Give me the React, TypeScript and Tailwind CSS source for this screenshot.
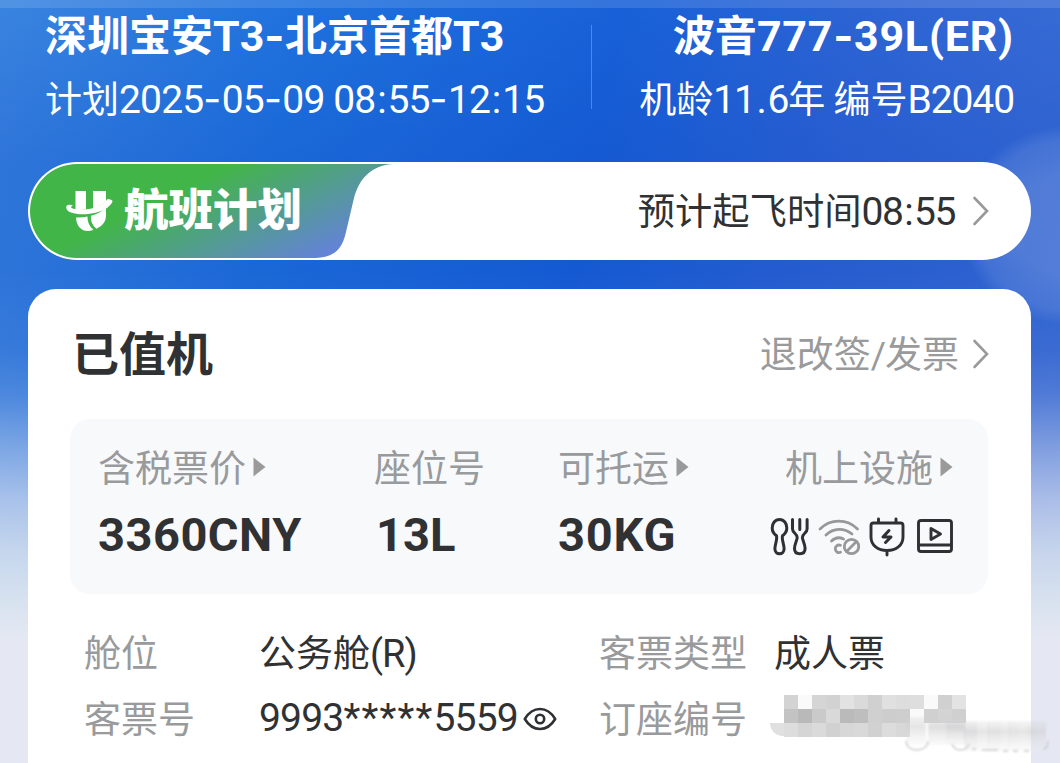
import React from 'react';

interface LatinProps {
  className?: string;
  children: React.ReactNode;
}

const Latin = ({ className = '', children }: LatinProps) => (
  <span className={`font-[Roboto,sans-serif] leading-none ${className}`}>{children}</span>
);

// Digits with wider separators, used for dates, times and codes
const Num = ({ value, className = 'text-[39px] tracking-[-1.1px]' }: { value: string; className?: string }) => (
  <Latin className={className}>
    {value.split(/([-:.]|\*+)/).map((part, i) => {
      if (part === '-') return <span key={i} className="font-[Inter,sans-serif] tracking-[0.5px]">-</span>;
      if (part === ':' || part === '.') return <span key={i} className="px-[1.7px]">{part}</span>;
      if (part.startsWith('*')) return <span key={i} className="tracking-[1.2px]">{part}</span>;
      return <React.Fragment key={i}>{part}</React.Fragment>;
    })}
  </Latin>
);

const Chevron = ({ className = '' }: { className?: string }) => (
  <svg className={`h-[30px] w-[18px] ${className}`} viewBox="0 0 18 30" fill="none" stroke="currentColor" strokeWidth="2.6" strokeLinecap="round">
    <path d="M2.500 2 15 15 2.500 28" />
  </svg>
);

const Caret = () => (
  <svg className="ml-1.5 h-5 w-3.5" viewBox="0 0 14 20" fill="#9a9a9b">
    <path d="M1.500 0.500 13.500 10 1.500 19.500Z" />
  </svg>
);

const CutleryIcon = () => (
  <svg className="h-10 w-10" viewBox="0 0 40 40" fill="none" stroke="#2f3033" strokeWidth="3" strokeLinecap="round" strokeLinejoin="round">
    <path d="M9.500 2.500c-4.500 0-7.300 4-7.300 8.500 0 4 2.300 6.300 4.300 7.800 1 3.500-1.600 8.500-1.600 13 0 3 2 5 4.600 5s4.600-2 4.600-5c0-4.500-2.600-9.500-1.600-13 2-1.500 4.300-3.800 4.300-7.800 0-4.500-2.800-8.500-7.300-8.500Z" />
    <path d="M22.500 2.500V12c0 4 4.700 4.500 4.700 8.500 0 2.500-2.700 6.500-2.700 11 0 3.200 2 5.300 5.300 5.300s5.300-2.100 5.300-5.300c0-4.500-2.700-8.500-2.700-11 0-4 4.700-4.500 4.700-8.500V2.500M29.800 2.500v10" />
  </svg>
);

const WifiOffIcon = () => (
  <svg className="h-10 w-[42px]" viewBox="0 0 42 40" fill="none" stroke="#97989a" strokeWidth="2.800" strokeLinecap="round">
    <path d="M2 12C12.500 1.500 29 1.500 39.500 12M8 18c7.500-7.300 18-7.300 26-1M13.500 24c3.500-3.300 8-4 12-2" />
    <path d="M22.500 28.300c-2.500-1-5.200.7-5.200 3.500s2.700 4.500 5.200 3.500" />
    <circle cx="33.500" cy="29.500" r="7.200" />
    <path d="m28.500 34.500 10-10" />
  </svg>
);

const PowerIcon = () => (
  <svg className="h-10 w-9" viewBox="0 0 36 40" fill="none" stroke="#2f3033" strokeWidth="2.900" strokeLinecap="round" strokeLinejoin="round">
    <path d="M4.500 6h27c1.500 0 2.500 1 2.500 2.500V20C34 28.500 27 33.500 18 33.500S2 28.500 2 20V8.500C2 7 3 6 4.500 6ZM9.500 6V2M27 6V2M18 34.500V38" />
    <path d="m20 13.500-6 6.500h8l-5.500 5.500" strokeWidth="3" />
  </svg>
);

const VideoIcon = () => (
  <svg className="h-10 w-9" viewBox="0 0 36 40" fill="none" stroke="#2f3033" strokeWidth="2.900" strokeLinejoin="round">
    <rect x="1.500" y="3.500" width="33" height="31" rx="2.500" />
    <path d="M1.500 28h33" />
    <path d="M14 11.500v11l9.500-5.500Z" />
  </svg>
);

const EyeIcon = () => (
  <svg className="ml-[5px] h-6 w-[34px]" viewBox="0 0 34 24" fill="none" stroke="#2f3033" strokeWidth="2.600" strokeLinejoin="round">
    <path d="M1.800 12C6 5 11.500 2 17 2s11 3 15.200 10C28 19 22.500 22 17 22S6 19 1.800 12Z" />
    <circle cx="17" cy="12" r="4.200" />
  </svg>
);

const AppLogo = () => (
  <svg className="h-[44px] w-[50px]" viewBox="0 0 50 44" fill="#fff">
    <path d="M10.500 2h10.500v18.500l-10.500.8ZM28 2h13v10.500c-3.500 3.500-8 5.800-13 7Z" />
    <path d="M1.500 17c1.500-1.500 4-1.500 6.500-.5-2 .8-2.500 2-1 2.800 8 3 30 1 35.500-9.300 2.200.3 4 .8 4.700 1.500 1 1.500-1 4-4.500 7C31 28-2 27.500 1.500 17Z" />
    <path d="M11 28.500c4 .3 8-.1 11.500-.9 0 6 2.200 10 6 13.200C20 44.500 11.500 40 11 28.500ZM26 26.800c5.500-1.500 10.500-4 15-7.800v7.500c0 6.500-3.800 10.500-9.500 13.200-4-3.200-6-7-5.500-12.900Z" />
  </svg>
);

const mosaic = [
  ['#d3d3d3', '#fafafa', '#d5d5d5', '#d2d2d2', '#e2e2e2', '#dadada', '#d0d0d0', '#e0e0e0', '#dddddd', '#dedede', '#fafafa', '#d0d0d0', '#e3e3e3'],
  ['#c3c3c3', '#b9b9b9', '#cacaca', '#d9d9d9', '#bababa', '#bebebe', '#d0d0d0', '#cdcdcd', '#cecece', '#fafafa', '#d0d0d0', '#d4d4d4', '#d0d0d0'],
  ['#dddddd', '#d5d5d5', '#dadada', '#d1d1d1', '#d7d7d7', '#d9d9d9', '#d1d1d1', '#dcdcdc', '#d8d8d8', '#ffffff', '#ffffff', '#ffffff', '#ffffff'],
];

// x, width and opacity of each streak in the smeared stamp
const streaks = [
  [4, 20, 0.55], [26, 18, 0.7], [44, 19, 0.9], [62, 13, 0.75], [75, 12, 0.55], [86, 13, 0.65],
  [99, 9, 0.55], [107, 10, 0.6], [117, 9, 0.55], [126, 9, 0.65], [135, 9, 0.55],
];

const Smear = () => (
  <svg className="absolute right-2 bottom-2 h-[38px] w-[150px] blur-[1px]" viewBox="0 0 150 38">
    <defs>
      <linearGradient id="smear" x1="0" y1="0" x2="0" y2="1">
        <stop offset="0" stopColor="#d4d4d6" stopOpacity="0.4" />
        <stop offset="0.35" stopColor="#cfcfd1" />
        <stop offset="1" stopColor="#ececee" stopOpacity="0.4" />
      </linearGradient>
    </defs>
    {streaks.map(([x, width, opacity]) => (
      <rect key={x} x={x} y={x < 60 ? 0 : 4} width={width} height={x < 60 ? 28 : 30} fill="url(#smear)" opacity={opacity} />
    ))}
    <path d="M4 24c0 12 22 12 22 0M50 27c3 8 14 8 17 0M70 32h4M80 33h16M101 34h5M111 34h5M122 34h5M141 32c4 0 5-4 5-8" fill="none" stroke="#cacace" strokeWidth="1.400" />
  </svg>
);

const App = () => {
  return (
    <div className="relative h-[763px] w-[1060px] overflow-hidden bg-[#1a62d8] bg-[linear-gradient(180deg,rgba(229,232,243,0)_270px,rgba(229,232,243,0.06)_350px,rgba(229,232,243,0.18)_395px,rgba(229,232,243,0.45)_450px,rgba(229,232,243,0.68)_500px,rgba(226,233,241,0.84)_550px,rgba(226,233,241,0.95)_605px,#e5e8f3_640px),radial-gradient(ellipse_110px_100px_at_1070px_225px,rgba(255,255,255,0.17)_50%,rgba(255,255,255,0.1)_85%,transparent),linear-gradient(180deg,transparent,rgba(0,50,180,0.16)_160px),linear-gradient(100deg,#3a84e0_0%,#1f72de_25%,#1861d8_52%,#2d64d4_72%,#3c6fd6_100%)] font-['Noto_Sans_CJK_SC',sans-serif] text-[#303133]">
      <div className="h-2 bg-white/12" />

      {/* Route and aircraft */}
      <header className="flex h-[154px] justify-between pl-[45px] pr-[46px] text-white">
        <div>
          <h1 className="h-[52px] text-[42px] leading-[50px] font-bold whitespace-nowrap">
            深圳宝安<Num value="T3-" className="text-[43px]" />北京首都<Num value="T3" className="text-[43px]" />
          </h1>
          <p className="mt-[11px] text-[37px] leading-[52px] whitespace-nowrap">
            计划<Num value="2025-05-09 08:55-12:15" className="text-[39px] tracking-[-0.85px]" />
          </p>
        </div>
        <div className="mt-[17px] ml-auto h-[84px] w-px bg-white/25" />
        <div className="ml-[47px] text-right">
          <h2 className="h-[52px] text-[42px] leading-[50px] font-bold whitespace-nowrap">
            波音<Num value="777-39L(ER)" className="text-[43px] tracking-[0.8px]" />
          </h2>
          <p className="mt-[11px] text-[37px] leading-[52px] whitespace-nowrap">
            机龄<Num value="11.6" />年 编号<Num value="B2040" />
          </p>
        </div>
      </header>

      {/* Flight status */}
      <section className="mx-7 flex h-[98px] w-[1003px] items-center overflow-hidden rounded-full bg-white pr-[41px]">
        <div className="relative h-full w-[370px]">
          <svg className="absolute inset-0 h-[98px] w-[370px]" viewBox="0 0 370 98">
            <defs>
              <linearGradient id="tab" gradientUnits="userSpaceOnUse" x1="190" y1="10" x2="255" y2="145">
                <stop offset="0" stopColor="#42b549" />
                <stop offset="0.800" stopColor="#6383d6" />
              </linearGradient>
            </defs>
            <path d="M49 2H366C342 3 331 18 326 36L318 70C314 88 306 95 288 96H49A47 47 0 0 1 49 2Z" fill="url(#tab)" />
          </svg>
          <div className="relative flex h-full items-center pl-[37px] text-white">
            <AppLogo />
            <span className="mb-[7px] ml-[9px] text-[44.5px] leading-none font-black">航班计划</span>
          </div>
        </div>
        <p className="mb-[3px] ml-auto text-[37.3px] whitespace-nowrap">
          预计起飞时间<Num value="08:55" className="text-[39px] tracking-[-1.4px]" />
        </p>
        <Chevron className="ml-[17px] text-[#999]" />
      </section>

      {/* Ticket card */}
      <main className="mt-[29px] ml-7 h-[474px] w-[1003px] rounded-t-[28px] bg-white pt-[32px]">
        <div className="flex h-[66px] items-center justify-between pr-[41px] pl-[44px]">
          <h2 className="mb-[7px] text-[47px] leading-none font-bold">已值机</h2>
          <div className="flex items-center text-[37px] text-[#999a9c]">
            <span className="mb-[4px] leading-[50px]">退改签<Latin className="text-[37px] tracking-[-1px]">/</Latin>发票</span>
            <Chevron className="ml-[13px]" />
          </div>
        </div>

        <div className="mt-[32px] ml-[42px] flex h-[175px] w-[918px] rounded-[20px] bg-[#f8f9fb] pt-[22px] pl-[28px]">
          <div className="w-[276px]">
            <div className="flex h-[52px] items-center text-[37px] text-[#999a9c]">含税票价<Caret /></div>
            <Latin className="mt-[18px] block text-[47px] font-bold tracking-[0.5px]">3360CNY</Latin>
          </div>
          <div className="w-[184px]">
            <div className="flex h-[52px] items-center text-[37px] text-[#999a9c]">座位号</div>
            <Latin className="mt-[18px] ml-[2px] block text-[47px] font-bold">13L</Latin>
          </div>
          <div className="w-[212px]">
            <div className="flex h-[52px] items-center text-[37px] text-[#999a9c]">可托运<Caret /></div>
            <Latin className="mt-[18px] block text-[47px] font-bold tracking-[0.8px]">30KG</Latin>
          </div>
          <div>
            <div className="ml-[15px] flex h-[52px] items-center text-[37px] text-[#999a9c]">机上设施<Caret /></div>
            <div className="mt-[24px] flex">
              <CutleryIcon />
              <div className="ml-[8px]"><WifiOffIcon /></div>
              <div className="ml-[9px]"><PowerIcon /></div>
              <div className="ml-[12px]"><VideoIcon /></div>
            </div>
          </div>
        </div>

        <div className="mt-[24px] grid auto-rows-[66px] grid-cols-[175px_340px_175px_1fr] pl-[56px] text-[37px] leading-[66px] whitespace-nowrap">
          <span className="text-[#999a9c]">舱位</span>
          <span>公务舱<Latin className="text-[38px] tracking-[-1px]">(R)</Latin></span>
          <span className="text-[#999a9c]">客票类型</span>
          <span>成人票</span>
          <span className="text-[#999a9c]">客票号</span>
          <span className="flex items-center pt-[3px]">
            <Num value="9993*****5559" className="text-[39px] tracking-[-0.8px]" />
            <EyeIcon />
          </span>
          <span className="text-[#999a9c]">订座编号</span>
          <div className="mt-[11px] ml-[10px] flex h-[42px]">
            <div className="-ml-[14px] mt-7 h-[13px] w-[14px] rounded-bl-full bg-[#e0e0e0]" />
            <div className="grid h-[42px] w-[182px] grid-cols-13 grid-rows-3">
              {mosaic.flat().map((color, i) => (
                <div key={i} style={{ backgroundColor: color }} />
              ))}
            </div>
          </div>
        </div>
      </main>
      <Smear />
    </div>
  );
};

export default App;
